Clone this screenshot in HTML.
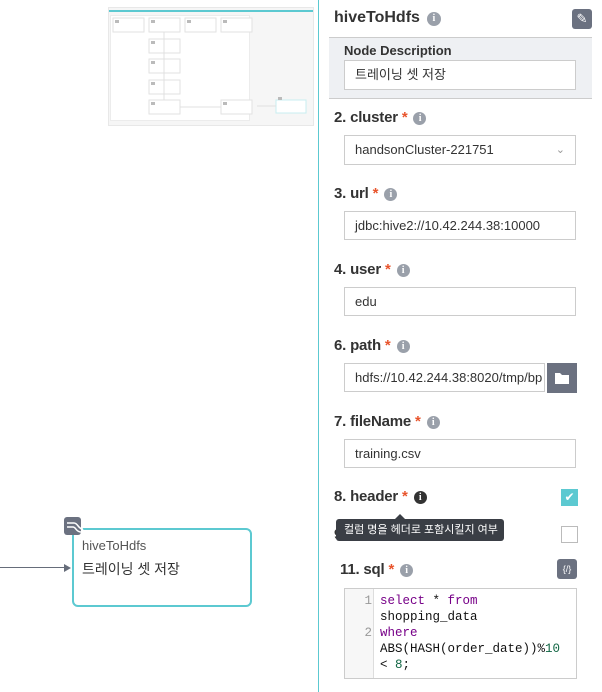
<!DOCTYPE html>
<html><head><meta charset="utf-8"><style>
*{box-sizing:border-box;margin:0;padding:0}
body{width:602px;height:692px;position:relative;overflow:hidden;background:#fff;font-family:"Liberation Sans","Noto Sans CJK KR",sans-serif;color:#333}
.a{position:absolute}
.lbl{position:absolute;left:334px;font-size:15px;color:#333;font-weight:bold;letter-spacing:-0.2px}
.lbl b{color:#e8542c;font-weight:bold}
.info{display:inline-block;width:13px;height:13px;border-radius:50%;background:#9aa0aa;color:#fff;font-size:10px;line-height:13px;text-align:center;font-family:"Liberation Serif",serif;font-weight:bold;vertical-align:1px;margin-left:6px}
.inp{position:absolute;left:344px;width:232px;height:29px;border:1px solid #ccc;background:#fff;font-size:13px;line-height:27px;padding-left:10px;color:#333;white-space:nowrap;overflow:hidden}
.cb{position:absolute;left:561px;width:17px;height:17px;border:1px solid #bbb;background:#fff}
.mono{font-family:"Liberation Mono",monospace;font-size:12.5px;line-height:16px}
.kw{color:#770088}
</style></head><body>
<!-- minimap -->
<div class="a" style="left:108px;top:7px;width:206px;height:119px;background:#f6f6f6;border:1px solid #e8e8e8"></div>
<div class="a" style="left:109px;top:10px;width:204px;height:2px;background:#5cc9d1"></div>
<div class="a" style="left:110px;top:15px;width:140px;height:106px;background:#fff;border:1px solid #ececec"></div>
<svg class="a" style="left:105px;top:0" width="210" height="130">
<g fill="#fff" stroke="#e2e2e2" stroke-width="1">
<rect x="8" y="18" width="31" height="14"/><rect x="44" y="18" width="31" height="14"/><rect x="80" y="18" width="31" height="14"/><rect x="116" y="18" width="31" height="14"/>
<rect x="44" y="39" width="31" height="14"/><rect x="44" y="59" width="31" height="14"/><rect x="44" y="80" width="31" height="14"/><rect x="44" y="100" width="31" height="14"/><rect x="116" y="100" width="31" height="14"/>
<rect x="171" y="100" width="30" height="13" stroke="#c8eef0"/></g>
<g stroke="#e0e0e0"><line x1="59" y1="32" x2="59" y2="100"/><line x1="75" y1="107" x2="116" y2="107"/><line x1="152" y1="106" x2="171" y2="106"/></g>
<g fill="#bbb"><rect x="10" y="20" width="4" height="3"/><rect x="46" y="20" width="4" height="3"/><rect x="82" y="20" width="4" height="3"/><rect x="118" y="20" width="4" height="3"/><rect x="46" y="41" width="4" height="3"/><rect x="46" y="61" width="4" height="3"/><rect x="46" y="82" width="4" height="3"/><rect x="46" y="102" width="4" height="3"/><rect x="118" y="102" width="4" height="3"/><rect x="173" y="97" width="4" height="3"/></g>
</svg>
<!-- teal divider -->
<div class="a" style="left:318px;top:0;width:1px;height:692px;background:#5cc9d1"></div>
<!-- left edge line & node -->
<div class="a" style="left:0;top:567px;width:68px;height:1px;background:#666d7a"></div>
<div class="a" style="left:64px;top:564px;width:0;height:0;border-left:7px solid #666d7a;border-top:4px solid transparent;border-bottom:4px solid transparent"></div>
<div class="a" style="left:72px;top:528px;width:180px;height:79px;border:2px solid #5cc9d1;border-radius:6px;background:#fff"></div>
<div class="a" style="left:82px;top:538px;font-size:13px;color:#555">hiveToHdfs</div>
<div class="a" style="left:82px;top:559px;font-size:14px;color:#333">트레이닝 셋 저장</div>
<div class="a" style="left:64px;top:517px;width:17px;height:18px;background:#6b7180;border-radius:3px"></div>
<svg class="a" style="left:64px;top:517px" width="22" height="22"><path d="M3 6h7c4 0 4 6 9 6M3 10h6c3 0 3 5 8 5M17 12l3 2-3 2" stroke="#fff" stroke-width="1.5" fill="none"/></svg>
<!-- right panel -->
<div class="a" style="left:334px;top:9px;font-size:16px;font-weight:bold;color:#333">hiveToHdfs<span class="info" style="width:14px;height:14px;line-height:14px;margin-left:7px">i</span></div>
<div class="a" style="left:572px;top:9px;width:20px;height:20px;background:#6b7180;border-radius:3px;color:#fff;font-size:13px;text-align:center;line-height:20px">✎</div>
<div class="a" style="left:329px;top:37px;width:263px;height:62px;background:#eef0f3;border-top:1px solid #ccc;border-bottom:1px solid #ccc"></div>
<div class="a" style="left:344px;top:43px;font-size:13px;font-weight:bold;color:#333">Node Description</div>
<div class="inp" style="top:60px;height:30px;line-height:28px">트레이닝 셋 저장</div>
<div class="lbl" style="top:109px">2. cluster <b>*</b><span class="info">i</span></div>
<div class="inp" style="top:135px;height:30px;line-height:28px">handsonCluster-221751<span style="position:absolute;right:10px;top:0;color:#999;font-size:11px">&#8964;</span></div>
<div class="lbl" style="top:185px">3. url <b>*</b><span class="info">i</span></div>
<div class="inp" style="top:211px">jdbc:hive2://10.42.244.38:10000</div>
<div class="lbl" style="top:261px">4. user <b>*</b><span class="info">i</span></div>
<div class="inp" style="top:287px">edu</div>
<div class="lbl" style="top:337px">6. path <b>*</b><span class="info">i</span></div>
<div class="inp" style="top:363px;width:201px">hdfs://10.42.244.38:8020/tmp/bp</div>
<div class="a" style="left:547px;top:363px;width:30px;height:30px;background:#6b7180"></div>
<svg class="a" style="left:554px;top:370px" width="16" height="16"><path d="M1 3h5l2 2h7v9H1z" fill="#fff"/></svg>
<div class="lbl" style="top:413px">7. fileName <b>*</b><span class="info">i</span></div>
<div class="inp" style="top:439px">training.csv</div>
<div class="lbl" style="top:488px">8. header <b>*</b><span class="info" style="background:#333">i</span></div>
<div class="cb" style="top:489px;background:#5cc9d1;border-color:#5cc9d1;color:#fff;font-size:12px;text-align:center;line-height:15px">✔</div>
<div class="lbl" style="top:526px">9</div>
<div class="cb" style="top:526px"></div>
<div class="a" style="left:336px;top:519px;width:168px;height:22px;background:#3a3e45;border-radius:3px;color:#fff;font-size:11px;line-height:22px;padding-left:8px">컬럼 명을 헤더로 포함시킬지 여부</div>
<div class="a" style="left:395px;top:514px;width:0;height:0;border-bottom:5px solid #3a3e45;border-left:5px solid transparent;border-right:5px solid transparent"></div>
<div class="lbl" style="left:340px;top:561px">11. sql <b>*</b><span class="info">i</span></div>
<div class="a" style="left:557px;top:559px;width:20px;height:20px;background:#6b7180;border-radius:3px;color:#fff;font-size:9px;text-align:center;line-height:20px">{/}</div>
<div class="a" style="left:344px;top:588px;width:233px;height:91px;border:1px solid #ccc;background:#fff"></div>
<div class="a" style="left:345px;top:589px;width:29px;height:89px;background:#f7f7f7;border-right:1px solid #ddd"></div>
<div class="a mono" style="left:345px;top:593px;width:27px;text-align:right;color:#999">1<br><br>2</div>
<div class="a mono" style="left:380px;top:593px;color:#111;white-space:pre"><span class="kw">select</span> * <span class="kw">from</span>
shopping_data
<span class="kw">where</span>
ABS(HASH(order_date))%<span style="color:#164">10</span>
&lt; <span style="color:#164">8</span>;</div>
</body></html>
